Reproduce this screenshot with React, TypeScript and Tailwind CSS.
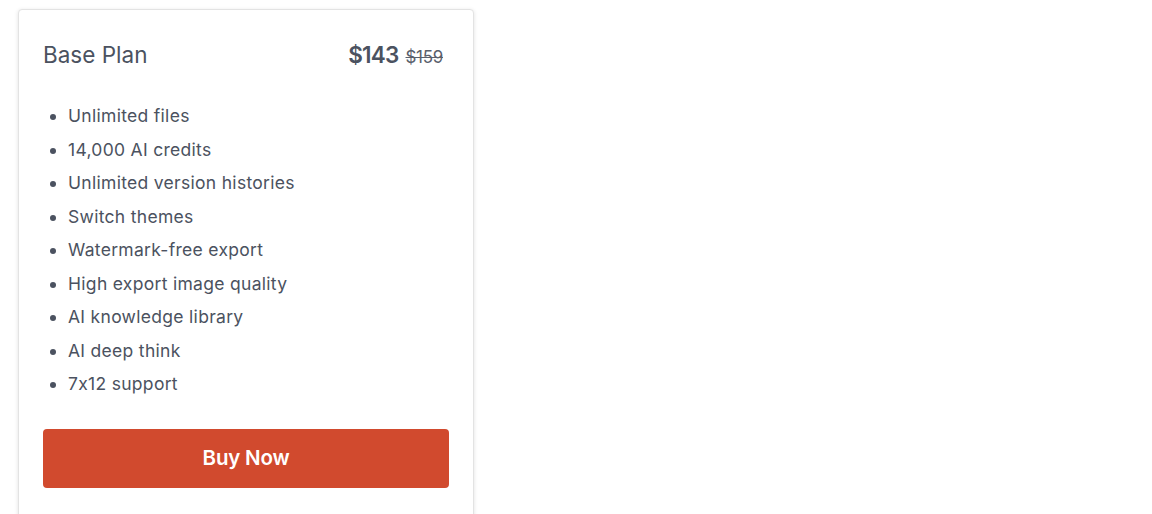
import React from "react";

const features = [
  "Unlimited files",
  "14,000 AI credits",
  "Unlimited version histories",
  "Switch themes",
  "Watermark-free export",
  "High export image quality",
  "AI knowledge library",
  "AI deep think",
  "7x12 support",
];

export default function App() {
  return (
    <div
      className="w-[1152px] h-[514px] overflow-hidden bg-white pl-[18px] pt-[9px] font-['Inter','Open_Sans',sans-serif] [font-feature-settings:'calt'_0]"
    >
      <div className="w-[456px] h-[540px] rounded-[4px] border border-[#e3e3e3] bg-white shadow-[0_1px_4px_rgba(0,0,0,0.12)] px-[24px] pt-[29px]">
        <div className="flex items-center justify-between h-[32px]">
          <div className="text-[22.5px] text-[#4b5260] font-normal">Base Plan</div>
          <div className="flex items-baseline gap-[7px] pr-[6px]">
            <span className="text-[22.5px] font-semibold text-[#4b5260] tracking-[-0.8px]">$143</span>
            <span className="text-[17px] text-[#5a606c] line-through tracking-[-0.3px]">$159</span>
          </div>
        </div>
        <ul className="mt-[28px] list-disc pl-[25px] text-[17.5px] text-[#4b5260] marker:text-[#4b5260] tracking-[0.3px]">
          {features.map((f) => (
            <li key={f} className="h-[33.5px] leading-[33.5px]">
              {f}
            </li>
          ))}
        </ul>
        <button className="mt-[28px] w-full h-[59px] rounded-[4px] bg-[#d14a2e] text-white text-[20.5px] font-semibold tracking-[-0.2px]">
          Buy Now
        </button>
      </div>
    </div>
  );
}
